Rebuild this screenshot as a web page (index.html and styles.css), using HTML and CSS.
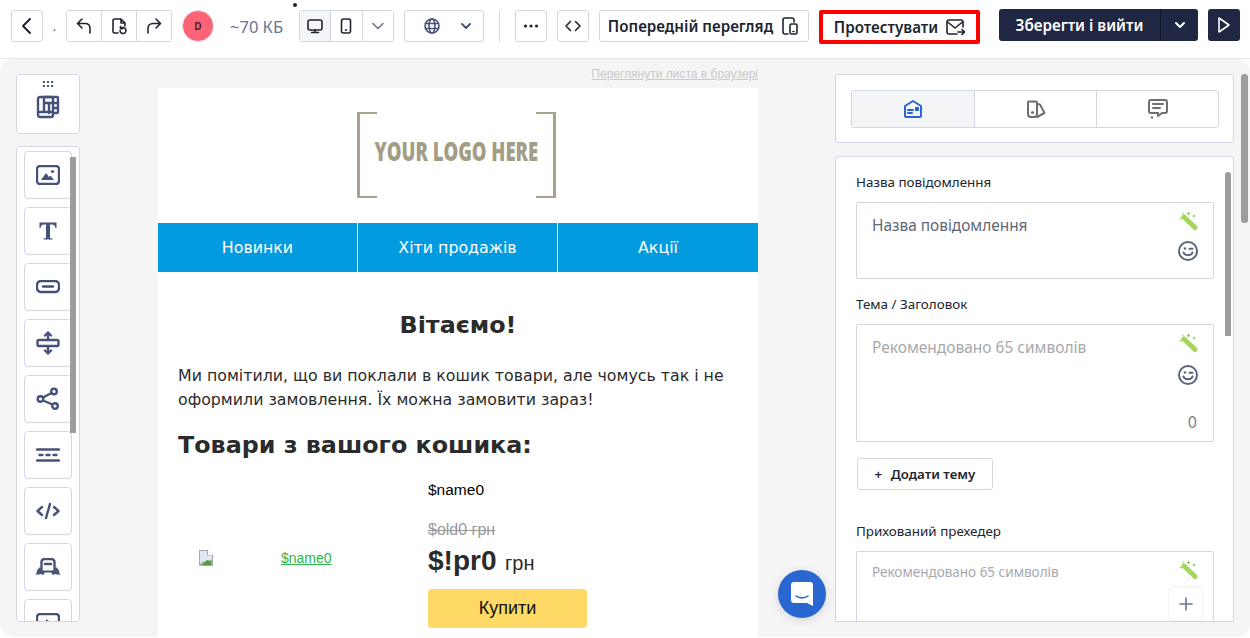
FILE: index.html
```html
<!DOCTYPE html>
<html lang="uk">
<head>
  <meta charset="UTF-8">
  <title>Редактор листа</title>
  <link rel="stylesheet" href="styles.css">
</head>
<body>
  <header class="topbar">
    <button class="btn square"><svg width="18" height="18" viewBox="0 0 18 18"><path d="M12 2 5 9l7 7" class="line"/></svg></button>
    <span class="name-dot">.</span>
    <div class="group history">
      <button class="seg"><svg width="18" height="18" viewBox="0 0 18 18"><path d="M7 2 2.500 6.500 7 11M3 6.500h7c3 0 5 2 5 5V16" class="line thin"/></svg></button>
      <button class="seg"><svg width="18" height="18" viewBox="0 0 18 18"><path d="M8 16H4.500A1.500 1.500 0 0 1 3 14.500v-11A1.500 1.500 0 0 1 4.500 2H11l4 4v3M11 2v4h4" class="line thin"/><path d="M10 13.500a3 3 0 1 0 1-2.200M10.500 9.500v2.200h2.200" class="line thin"/></svg></button>
      <button class="seg"><svg width="18" height="18" viewBox="0 0 18 18"><path d="M11 2l4.500 4.500L11 11M15 6.500H8c-3 0-5 2-5 5V16" class="line thin"/></svg></button>
    </div>
    <div class="avatar">D</div>
    <span class="weight">~70 КБ</span>
    <div class="group devices">
      <button class="seg active"><svg width="18" height="18" viewBox="0 0 18 18"><rect x="2" y="3" width="14" height="10" rx="2" class="line thin"/><path d="M9 13v2.500M5.500 15.500h7" class="line thin"/></svg></button>
      <button class="seg"><svg width="18" height="18" viewBox="0 0 18 18"><rect x="4.500" y="2" width="9" height="14" rx="2" class="line thin"/><path d="M8.500 13h1" class="line thin"/></svg></button>
      <button class="seg"><svg width="14" height="14" viewBox="0 0 14 14"><path d="m2 4.500 5 5 5-5" class="line thin slate"/></svg></button>
    </div>
    <button class="btn globe">
      <svg width="18" height="18" viewBox="0 0 18 18"><circle cx="9" cy="9" r="7" class="line thin indigo"/><ellipse cx="9" cy="9" rx="3" ry="7" class="line thin indigo"/><path d="M2.500 6.500h13M2.500 11.500h13" class="line thin indigo"/></svg>
      <svg width="12" height="12" viewBox="0 0 12 12"><path d="m2 4 4 4 4-4" class="line indigo"/></svg>
    </button>
    <span class="divider"></span>
    <button class="btn square"><svg width="18" height="18" viewBox="0 0 18 18"><circle cx="3.500" cy="9" r="1.600"/><circle cx="9" cy="9" r="1.600"/><circle cx="14.500" cy="9" r="1.600"/></svg></button>
    <button class="btn square"><svg width="18" height="18" viewBox="0 0 18 18"><path d="M6.500 4.500 2 9l4.500 4.500M11.500 4.500 16 9l-4.500 4.500" class="line thin"/></svg></button>
    <button class="btn text-btn preview">Попередній перегляд
      <svg width="20" height="20" viewBox="0 0 20 20"><path d="M8 18H5a2 2 0 0 1-2-2V4a2 2 0 0 1 2-2h7a2 2 0 0 1 2 2v2" class="line thin"/><rect x="10" y="8" width="7" height="10" rx="1.500" class="line thin"/><path d="M13 15.500h1" class="line thin"/></svg>
    </button>
    <button class="btn text-btn test">Протестувати
      <svg width="20" height="20" viewBox="0 0 20 20"><path d="M18 10V5a2 2 0 0 0-2-2H4a2 2 0 0 0-2 2v10a2 2 0 0 0 2 2h8" class="line thin"/><path d="m2.500 5 7.500 6 7.500-6M13 15h6.500M17 12.500l2.500 2.500-2.500 2.500" class="line thin"/></svg>
    </button>
    <div class="save">
      <span class="save-label">Зберегти і вийти</span>
      <span class="save-arrow"><svg width="12" height="12" viewBox="0 0 12 12"><path d="m2 4 4 4 4-4" class="line white"/></svg></span>
    </div>
    <button class="play"><svg width="18" height="18" viewBox="0 0 18 18"><path d="M4 2v14l10-7z" class="line thin white"/></svg></button>
    <span class="stray-dot"></span>
  </header>

  <main class="workspace">
    <aside class="palette">
      <div class="card structure">
        <svg class="grip" width="11" height="6" viewBox="0 0 11 6"><path d="M0 0h2v2H0zM4 0h2v2H4zM8 0h2v2H8zM0 4h2v2H0zM4 4h2v2H4zM8 4h2v2H8z"/></svg>
        <svg class="tool-icon" width="24" height="24" viewBox="0 0 24 24"><rect x="2" y="2" width="15" height="20" rx="2" class="line indigo"/><path d="M8 2h13a1 1 0 0 1 1 1v14a1 1 0 0 1-1 1h-4M8 2v15M2 17h15M8 8h14M13 8v10M17 13h5" class="line indigo"/></svg>
      </div>
      <div class="card tools">
        <div class="tool"><svg width="24" height="20" viewBox="0 0 24 20"><rect x="1" y="1" width="22" height="18" rx="3" class="line indigo"/><path d="m5 15 5-7 3 4 1.500-1.500L18 15z" class="fill-indigo"/><circle cx="16.500" cy="6.500" r="1.500" class="fill-indigo"/></svg></div>
        <div class="tool"><svg width="18" height="18" viewBox="0 0 18 18"><path d="M0.500 0.500h17v5.500h-1c-.5-2.500-1.500-3.500-3.500-3.500h-2V15c0 1 .5 1.500 2.500 1.500v1h-9v-1c2 0 2.500-.5 2.500-1.500V2.500H5C3 2.500 2 3.500 1.500 6h-1z" class="fill-indigo"/></svg></div>
        <div class="tool"><svg width="24" height="14" viewBox="0 0 24 14"><rect x="1" y="1" width="22" height="11" rx="4" class="line indigo"/><path d="M7 6.500h10" class="line indigo"/></svg></div>
        <div class="tool"><svg width="24" height="24" viewBox="0 0 24 24"><rect x="1.500" y="9" width="21" height="6" rx="1.500" class="line indigo"/><path d="M12 1.500V9M9 4.500l3-3 3 3M12 15v7.500M9 19.500l3 3 3-3" class="line indigo"/></svg></div>
        <div class="tool"><svg width="24" height="24" viewBox="0 0 24 24"><circle cx="18" cy="4.500" r="2.800" class="line indigo"/><circle cx="4.500" cy="12" r="2.800" class="line indigo"/><circle cx="19" cy="19" r="2.800" class="line indigo"/><path d="m7 10.500 8.500-4.500M7 13.500l9.500 4" class="line indigo"/></svg></div>
        <div class="tool"><svg width="24" height="14" viewBox="0 0 24 14"><path d="M1 1.500h22M1 12.500h22" class="line indigo"/><path d="M3.500 7h3M10.500 7h3M17.500 7h3" class="line indigo"/></svg></div>
        <div class="tool"><svg width="24" height="18" viewBox="0 0 24 18"><path d="M6 5 1.500 9 6 13M18 5l4.500 4L18 13M14 2l-4 14" class="line indigo"/></svg></div>
        <div class="tool"><svg width="24" height="18" viewBox="0 0 24 18"><path d="M5.500 11V4a3 3 0 0 1 3-3h7a3 3 0 0 1 3 3v7" class="line indigo"/><path d="M9 6h6" class="line indigo"/><path d="M0 17l1.500-5.500L4 9l3 3.500h10L20 9l2.500 2.500L24 17l-5-1-2 1-2-2.500H9L7 17l-2-1z" class="fill-indigo"/></svg></div>
        <div class="tool"><svg width="24" height="20" viewBox="0 0 24 20"><rect x="1" y="1" width="22" height="18" rx="3" class="line indigo"/><path d="m10 6 6 4-6 4z" class="fill-indigo"/></svg></div>
        <span class="tools-scroll"></span>
      </div>
    </aside>

    <section class="canvas">
      <a class="browser-link">Переглянути листа в браузері</a>
      <article class="email">
        <div class="logo-row">
          <div class="logo">
            <span class="bracket left"></span>
            <span class="logo-text"><span>YOUR LOGO HERE</span></span>
            <span class="bracket right"></span>
          </div>
        </div>
        <nav class="mail-nav">
          <a>Новинки</a>
          <a>Хіти продажів</a>
          <a>Акції</a>
        </nav>
        <div class="mail-body">
          <h1>Вітаємо!</h1>
          <p>Ми помітили, що ви поклали в кошик товари, але чомусь так і не оформили замовлення. Їх можна замовити зараз!</p>
          <h2>Товари з вашого кошика:</h2>
        </div>
        <div class="product">
          <div class="product-image">
            <svg class="broken" width="16" height="16" viewBox="0 0 16 16"><path d="M1 0h9l5 5v11H1z" fill="#a9a9a9"/><path d="M2 1h7v4.500h5V9l-5 4-3-2-4 3z" fill="#dfe9f6"/><path d="M4 15l5-5 4 1v4z" fill="#4f9c3a"/><path d="m10 0 5 5h-5z" fill="#fff"/></svg>
            <a>$name0</a>
          </div>
          <div class="product-info">
            <div class="product-name">$name0</div>
            <div class="old-price">$old0 грн</div>
            <div class="price"><b>$!pr0</b> грн</div>
            <a class="buy">Купити</a>
          </div>
        </div>
      </article>
    </section>

    <aside class="settings">
      <div class="card tabs-card">
        <div class="tabs">
          <div class="tab active"><svg width="20" height="20" viewBox="0 0 20 20"><path d="M2 7 10 2l8 5v9.500a1.500 1.500 0 0 1-1.500 1.500h-13A1.500 1.500 0 0 1 2 16.500z" class="line blue"/><path d="M5 11h5M5 14h4" class="line blue"/><rect x="12" y="8" width="4" height="4" class="fill-blue"/></svg></div>
          <div class="tab"><svg width="20" height="20" viewBox="0 0 20 20"><path d="M2 3.500a1 1 0 0 1 1-1h7a1 1 0 0 1 1 1V15a3 3 0 0 1-3 3H5a3 3 0 0 1-3-3z" class="line grey"/><circle cx="6.500" cy="13.500" r="1.500" class="fill-grey"/><path d="m11 5 3 .5 4.500 8.500-7.500 4" class="line grey"/></svg></div>
          <div class="tab"><svg width="22" height="22" viewBox="0 0 22 22"><path d="M4 2h14a2 2 0 0 1 2 2v9a2 2 0 0 1-2 2h-3l-4 3v-3H4a2 2 0 0 1-2-2V4a2 2 0 0 1 2-2z" class="line grey"/><path d="M6 6h10M6 10h7" class="line grey"/><circle cx="5" cy="19.500" r="1.200" class="fill-grey"/></svg></div>
        </div>
      </div>
      <div class="card form-card">
        <label>Назва повідомлення</label>
        <div class="field first-field">
          <span class="value">Назва повідомлення</span>
          <svg class="wand" width="20" height="20" viewBox="0 0 20 20"><path d="M6 6l11 10.500" class="wand-stick"/><path d="M10.500 0l.6 1.900 1.900.6-1.900.6-.6 1.900-.6-1.900L8 2.500l1.900-.6zM16 3l.5 1.500 1.500.5-1.500.5-.5 1.500-.5-1.500L14 5l1.500-.5zM3 6l.4 1.200 1.200.4-1.200.4L3 9.200 2.600 8l-1.200-.4 1.200-.4zM5 1l.3.9.9.3-.9.3-.3.9-.3-.9-.9-.3.9-.3z" class="wand-spark"/></svg>
          <svg class="smile" width="20" height="20" viewBox="0 0 20 20"><circle cx="10" cy="10" r="9" class="line grey-blue"/><path d="M5.500 11.500c1 3.500 8 3.500 9 0" class="line grey-blue"/><circle cx="7" cy="7.500" r="1.200" class="fill-grey-blue"/><path d="M11.500 7.800h3" class="line grey-blue"/></svg>
        </div>
        <label>Тема / Заголовок</label>
        <div class="field subject-field">
          <span class="placeholder">Рекомендовано 65 символів</span>
          <svg class="wand" width="20" height="20" viewBox="0 0 20 20"><path d="M6 6l11 10.500" class="wand-stick"/><path d="M10.500 0l.6 1.900 1.900.6-1.900.6-.6 1.900-.6-1.900L8 2.500l1.900-.6zM16 3l.5 1.500 1.500.5-1.500.5-.5 1.500-.5-1.500L14 5l1.500-.5zM3 6l.4 1.200 1.200.4-1.200.4L3 9.200 2.600 8l-1.200-.4 1.200-.4zM5 1l.3.9.9.3-.9.3-.3.9-.3-.9-.9-.3.9-.3z" class="wand-spark"/></svg>
          <svg class="smile" width="20" height="20" viewBox="0 0 20 20"><circle cx="10" cy="10" r="9" class="line grey-blue"/><path d="M5.500 11.500c1 3.500 8 3.500 9 0" class="line grey-blue"/><circle cx="7" cy="7.500" r="1.200" class="fill-grey-blue"/><path d="M11.500 7.800h3" class="line grey-blue"/></svg>
          <span class="counter">0</span>
        </div>
        <button class="add-topic"><span>+</span> Додати тему</button>
        <label>Прихований прехедер</label>
        <div class="field preheader-field">
          <span class="placeholder small">Рекомендовано 65 символів</span>
          <svg class="wand" width="20" height="20" viewBox="0 0 20 20"><path d="M6 6l11 10.500" class="wand-stick"/><path d="M10.500 0l.6 1.900 1.900.6-1.900.6-.6 1.900-.6-1.900L8 2.500l1.900-.6zM16 3l.5 1.500 1.500.5-1.500.5-.5 1.500-.5-1.500L14 5l1.500-.5zM3 6l.4 1.200 1.200.4-1.200.4L3 9.200 2.600 8l-1.200-.4 1.200-.4zM5 1l.3.9.9.3-.9.3-.3.9-.3-.9-.9-.3.9-.3z" class="wand-spark"/></svg>
        </div>
        <span class="form-scroll"></span>
        <button class="float-plus"><svg width="14" height="14" viewBox="0 0 14 14"><path d="M7 1v12M1 7h12" class="line thin slate"/></svg></button>
      </div>
    </aside>
    <span class="page-scroll"></span>

    <button class="chat">
      <svg width="24" height="26" viewBox="0 0 24 26"><path d="M4 1h16a3 3 0 0 1 3 3v21l-6-3H4a3 3 0 0 1-3-3V4a3 3 0 0 1 3-3z" fill="#fff"/><path d="M6 15c3 2.500 9 2.500 12 0" fill="none" stroke="#2a66d0" stroke-width="1.600" stroke-linecap="round"/></svg>
    </button>
  </main>
</body>
</html>
```

FILE: styles.css
```css
* { box-sizing: border-box; }
html, body { margin: 0; height: 100%; }
body { font-family: "Noto Sans", sans-serif; background: #fff; color: #1f2430; overflow: hidden; }
button { font-family: inherit; background: #fff; padding: 0; cursor: pointer; color: inherit; }
svg { display: block; fill: #1f2430; }

.line { fill: none; stroke: #1f2430; stroke-width: 2; stroke-linecap: round; stroke-linejoin: round; }
.line.thin { stroke-width: 1.600; }
.line.slate { stroke: #6b7595; }
.line.indigo { stroke: #47527a; }
.palette .line.indigo { stroke-width: 2.400; }
.line.white { stroke: #fff; }
.line.blue { stroke: #2a66d0; }
.line.grey { stroke: #6f6f73; }
.line.grey-blue { stroke: #5b6478; }
.fill-indigo { fill: #47527a; }
.fill-blue { fill: #2a66d0; }
.fill-grey { fill: #6f6f73; }
.fill-grey-blue { fill: #5b6478; }
.wand-stick { fill: none; stroke: #a4d65e; stroke-width: 5; stroke-linecap: round; }
.wand-spark { fill: #7fc24a; }

/* top bar */
.topbar { height: 59px; display: flex; align-items: flex-start; padding: 10px 0 0 11px; border-bottom: 1px solid #e4e4e8; position: relative; }
.btn { height: 32px; border: 1px solid #d3d6e3; border-radius: 3px; display: flex; align-items: center; justify-content: center; }
.square { width: 32px; }
.name-dot { width: 23px; text-align: center; font-size: 13px; line-height: 32px; color: #7a5a2a; }
.group { height: 32px; display: flex; border: 1px solid #d3d6e3; border-radius: 3px; overflow: hidden; }
.seg { flex: 1; border: none; border-left: 1px solid #d3d6e3; display: flex; align-items: center; justify-content: center; }
.seg:first-child { border-left: none; }
.seg.active { background: #f4f5f7; }
.history { width: 106px; }
.avatar { width: 32px; height: 32px; margin-left: 10px; border-radius: 50%; background: #fd6376; border: 1px solid #e3e3e8; color: #3a1a20; font-size: 10px; font-weight: 600; display: flex; align-items: center; justify-content: center; }
.weight { width: 69px; margin-left: 16px; font-size: 16.500px; line-height: 34px; color: #6b7595; white-space: nowrap; }
.devices { width: 95px; }
.globe { width: 80px; margin-left: 10px; gap: 19px; padding-left: 6px; }
.divider { width: 1px; height: 32px; margin: 0 15px; background: #d9dbe4; }
.preview { width: 210px; margin-left: 10px; }
.text-btn { font-size: 15.200px; font-weight: 600; gap: 7px; white-space: nowrap; color: #20242e; }
.topbar .square + .square { margin-left: 10px; }
.test { width: 161px; height: 34px; margin-left: 10px; border: 4px solid #f00; border-radius: 2px; }
.save { width: 199px; height: 32px; margin: -1px 0 0 19px; background: #1f2742; border-radius: 3px; display: flex; color: #fff; font-size: 15.200px; font-weight: 600; }
.save-label { flex: 1; text-align: center; line-height: 32px; white-space: nowrap; }
.save-arrow { width: 38px; border-left: 1px solid #0f1526; display: flex; align-items: center; justify-content: center; }
.play { width: 32px; height: 32px; margin: -1px 0 0 10px; background: #1f2742; border: none; border-radius: 3px; display: flex; align-items: center; justify-content: center; }
.play svg { fill: none; }
.stray-dot { position: absolute; left: 293px; top: 3px; width: 4px; height: 4px; border-radius: 50%; background: #1f2430; }

/* workspace */
.workspace { height: 578px; display: flex; background: #f5f5f5; border-radius: 14px; margin: 0 0 1px; padding-top: 15px; position: relative; overflow: hidden; }
.card { background: #fff; border: 1px solid #d3d6e3; border-radius: 3px; }

.palette { width: 64px; margin-left: 16px; height: 548px; display: flex; flex-direction: column; gap: 12px; flex: none; }
.structure { height: 60px; display: flex; flex-direction: column; align-items: center; padding-top: 6px; flex: none; }
.grip { fill: #47527a; }
.tool-icon { margin-top: 8px; fill: none; }
.tools { flex: 1; padding: 4px 0 0 7px; position: relative; overflow: hidden; }
.tool { width: 48px; height: 48px; margin-bottom: 8px; border: 1px solid #d3d6e3; border-radius: 4px; display: flex; align-items: center; justify-content: center; }
.tool svg { fill: none; }
.tools-scroll { position: absolute; left: 53px; top: 10px; width: 6px; height: 276px; background: #9d9d9d; }

.canvas { width: 600px; margin-left: 78px; flex: none; }
.browser-link { display: block; height: 14px; text-align: right; font: 12px/0 "Liberation Sans", sans-serif; color: #c9c9c9; text-decoration: underline; }
.email { background: #fff; height: 560px; overflow: hidden; }

.logo-row { height: 135px; padding: 24px 3px 0 0; display: flex; justify-content: center; }
.logo { width: 199px; height: 86px; display: flex; align-items: center; justify-content: space-between; }
.bracket { width: 20px; height: 86px; border: solid #a8a28c; border-width: 2px 0; }
.bracket.left { border-left: 3px solid #a8a28c; }
.bracket.right { border-right: 3px solid #a8a28c; }
.logo-text { width: 159px; padding-bottom: 8px; display: flex; justify-content: center; }
.logo-text span { font: 800 26px "Open Sans", sans-serif; color: #a39d85; white-space: nowrap; transform: scaleX(.71); }

.mail-nav { height: 49px; display: grid; grid-template-columns: repeat(3, 1fr); background: #039be0; }
.mail-nav a { color: #fff; font: 15.800px/50px "DejaVu Sans", sans-serif; text-align: center; border-right: 1px solid #fff; }
.mail-nav a:last-child { border-right: none; }

.mail-body { padding: 0 20px; font-family: "DejaVu Sans", sans-serif; color: #2b2b2b; }
.mail-body h1 { margin: 0; padding-top: 38px; font-size: 23.800px; line-height: 30px; font-weight: 700; text-align: center; }
.mail-body p { margin: 24px 0 0; font-size: 15.800px; line-height: 24px; }
.mail-body h2 { margin: 18px 0 0; font-size: 23.800px; line-height: 30px; font-weight: 700; }

.product { display: flex; padding-top: 20px; font-family: "Liberation Sans", sans-serif; }
.product-image { width: 270px; display: flex; align-items: center; padding: 8px 0 0 40px; flex: none; font-size: 14px; }
.product-image a { margin-left: 67px; color: #2eb84a; text-decoration: underline; }
.product-info { flex: 1; }
.product-name { font-size: 15.500px; line-height: 20px; color: #000; }
.old-price { margin-top: 20px; font-size: 16px; line-height: 20px; color: #9a9a9a; text-decoration: line-through; }
.price { margin-top: 4px; font-size: 20px; line-height: 34px; color: #2b2b2b; }
.price b { font-size: 28px; margin-right: 3px; }
.buy { display: block; width: 159px; height: 39px; margin-top: 9px; background: #ffd966; border-radius: 4px; text-align: center; font-size: 18px; line-height: 39px; color: #111; }

/* right panel */
.settings { width: 399px; margin-left: 77px; height: 548px; display: flex; flex-direction: column; gap: 13px; flex: none; }
.tabs-card { height: 69px; padding: 15px 14px 0 15px; flex: none; }
.tabs { height: 38px; display: grid; grid-template-columns: repeat(3, 1fr); border: 1px solid #d3d6e3; border-radius: 3px; overflow: hidden; }
.tab { display: flex; align-items: center; justify-content: center; border-left: 1px solid #d3d6e3; }
.tab:first-child { border-left: none; }
.tab svg { fill: none; }
.tab.active { background: #f4f5f7; }

.form-card { flex: 1; padding: 17px 0 0 20px; position: relative; overflow: hidden; border-radius: 3px 3px 0 0; }
.form-card label { display: block; font-size: 13.400px; line-height: 16px; color: #20242e; }
.field { width: 358px; margin-top: 12px; border: 1px solid #d3d6e3; border-radius: 2px; position: relative; padding: 11px 15px; }
.first-field { height: 77px; margin-bottom: 17px; }
.subject-field { height: 118px; }
.preheader-field { height: 100px; padding-top: 8px; }
.value { font-size: 15.400px; line-height: 20px; color: #5f6675; }
.placeholder { font-size: 15.500px; line-height: 20px; color: #a8a8ad; }
.placeholder.small { font-size: 13.500px; }
.wand { position: absolute; right: 15px; top: 8px; fill: none; }
.smile { position: absolute; right: 15px; top: 38px; fill: none; }
.subject-field .smile { top: 40px; }
.counter { position: absolute; right: 16px; bottom: 8px; font-size: 16px; color: #7a8194; }
.add-topic { display: block; width: 136px; height: 32px; margin: 16px 0 33px 1px; border: 1px solid #d3d6e3; border-radius: 3px; font-size: 13.300px; font-weight: 600; color: #20242e; }
.add-topic span { margin-right: 5px; }
.form-scroll { position: absolute; left: 389px; top: 15px; width: 6px; height: 164px; background: #9d9d9d; border-radius: 3px 3px 0 0; }
.float-plus { position: absolute; left: 334px; top: 431px; width: 32px; height: 32px; border: none; border-radius: 2px; box-shadow: 0 0 4px rgba(30, 40, 70, .12); display: flex; align-items: center; justify-content: center; }
.float-plus svg { fill: none; }

.page-scroll { width: 7px; height: 149px; margin-left: 7px; background: #9d9d9d; border-radius: 3px; flex: none; }

.chat { position: absolute; left: 778px; top: 511px; width: 48px; height: 48px; border: none; border-radius: 50%; background: #2a66d0; display: flex; align-items: center; justify-content: center; box-shadow: 0 2px 10px rgba(30, 40, 70, .15); }
.chat svg { fill: none; }
```
